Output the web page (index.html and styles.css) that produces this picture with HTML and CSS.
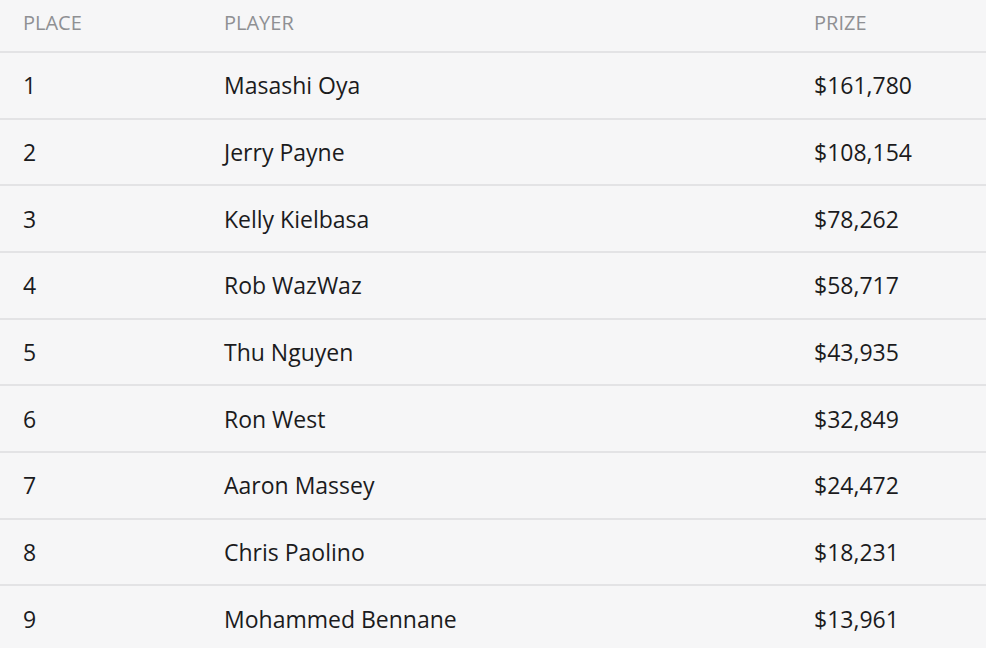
FILE: index.html
```html
<!DOCTYPE html>
<html>
<head>
<meta charset="utf-8">
<link rel="stylesheet" href="styles.css">
</head>
<body>
<table class="results">
  <colgroup>
    <col class="c-place"><col class="c-player"><col class="c-prize">
  </colgroup>
  <thead>
    <tr><th>Place</th><th>Player</th><th>Prize</th></tr>
  </thead>
  <tbody>
    <tr><td>1</td><td>Masashi Oya</td><td>$161,780</td></tr>
    <tr><td>2</td><td>Jerry Payne</td><td>$108,154</td></tr>
    <tr><td>3</td><td>Kelly Kielbasa</td><td>$78,262</td></tr>
    <tr><td>4</td><td>Rob WazWaz</td><td>$58,717</td></tr>
    <tr><td>5</td><td>Thu Nguyen</td><td>$43,935</td></tr>
    <tr><td>6</td><td>Ron West</td><td>$32,849</td></tr>
    <tr><td>7</td><td>Aaron Massey</td><td>$24,472</td></tr>
    <tr><td>8</td><td>Chris Paolino</td><td>$18,231</td></tr>
    <tr><td>9</td><td>Mohammed Bennane</td><td>$13,961</td></tr>
  </tbody>
</table>
</body>
</html>
```
FILE: styles.css
```css
html, body {
  margin: 0;
  padding: 0;
  background: #f6f6f7;
  font-family: "Open Sans", "Noto Sans", sans-serif;
}
.results {
  width: 100%;
  border-collapse: collapse;
  table-layout: fixed;
}
.results th {
  text-align: left;
  font-weight: 400;
  font-size: 20px;
  line-height: 27px;
  text-transform: uppercase;
  color: #8f9093;
  height: 52px;
  padding: 0 0 7px 23px;
  box-sizing: border-box;
  vertical-align: middle;
  border-bottom: 2px solid #e3e3e5;
}
.results td {
  font-size: 23px;
  line-height: 30px;
  color: #1b1b1d;
  height: 66.67px;
  box-sizing: border-box;
  padding: 0 0 0 23px;
  vertical-align: middle;
  border-bottom: 2px solid #e3e3e5;
}
.results tbody tr:last-child td {
  border-bottom: none;
}
.c-place { width: 201px; }
.c-player { width: 590px; }
```
